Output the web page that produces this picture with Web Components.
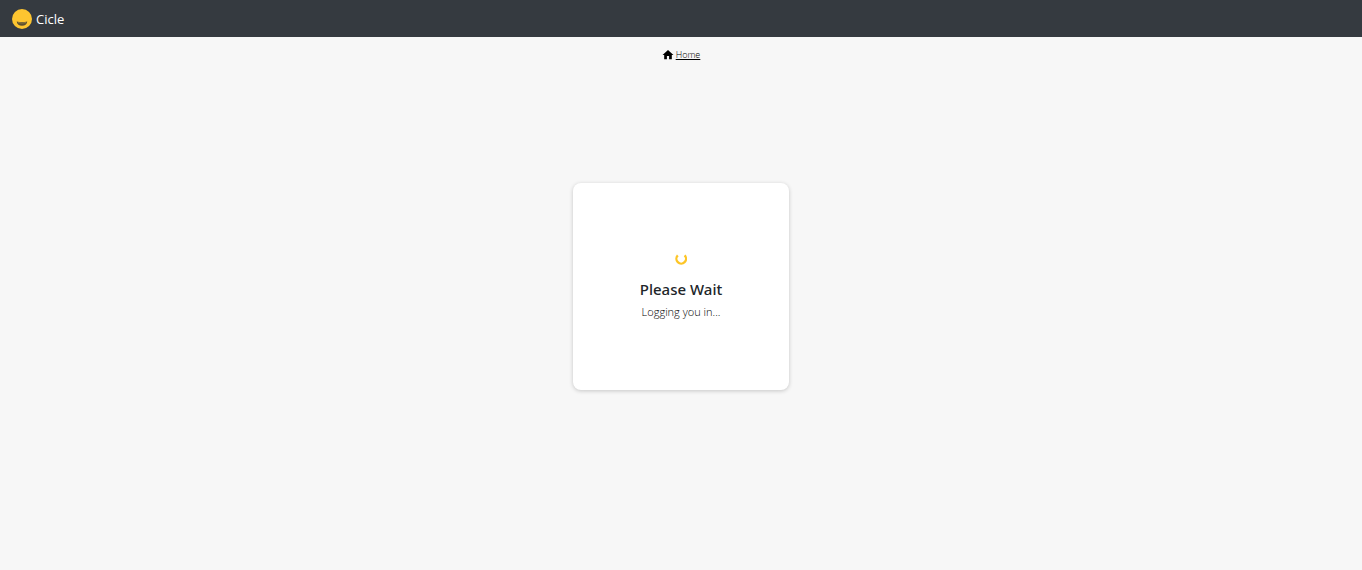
<!DOCTYPE html>
<html lang="en">
<head>
<meta charset="utf-8">
<meta name="viewport" content="width=device-width, initial-scale=1">
<title>Cicle</title>
<style>
body { margin: 0; background: #f7f7f7; color: #212529; font-family: "Noto Sans", "Open Sans", sans-serif; }
</style>
</head>
<body>
<cicle-app></cicle-app>
<script>
const define = (name, html) => {
  const template = document.createElement("template");
  template.innerHTML = html;
  customElements.define(name, class extends HTMLElement {
    constructor() {
      super();
      this.attachShadow({ mode: "open" }).append(template.content.cloneNode(true));
    }
  });
};

define("cicle-logo", `
<style>:host { display: block; width: 20px; height: 20px; } svg { display: block; }</style>
<svg width="20" height="20" viewBox="0 0 20 20" aria-hidden="true">
  <circle cx="10" cy="10" r="10" fill="#fdc530"/>
  <path d="M4.7 12.4Q10 13.8 15.3 12.4Q14.5 16.8 10 16.8Q5.5 16.8 4.7 12.4Z" fill="#5c4f30"/>
  <path d="M6 13.6Q10 14.4 14 13.6" fill="none" stroke="#a58a3a" stroke-width=".8"/>
</svg>`);

define("cicle-navbar", `
<style>
:host { display: block; background: #353a40; color: #fff; }
header { display: flex; align-items: center; gap: 4px; height: 37px; padding: 0 12px; font-family: "Open Sans", sans-serif; font-size: 13px; line-height: 20px; }
</style>
<header><cicle-logo></cicle-logo><slot></slot></header>`);

define("cicle-breadcrumb", `
<style>
:host { display: block; }
nav { display: flex; justify-content: center; align-items: center; gap: 2px; padding: 11px 0; line-height: 14px; font-size: 9px; }
a { color: #000; font-family: "Open Sans", sans-serif; font-weight: 300; }
svg { display: block; }
</style>
<nav aria-label="Breadcrumb">
  <svg width="12" height="12" viewBox="1 1 22 22" aria-hidden="true"><path fill="#000" d="M10 20v-6h4v6h5v-8h3L12 3 2 12h3v8z"/></svg>
  <a href="#"><slot></slot></a>
</nav>`);

define("cicle-spinner", `
<style>:host { display: block; } svg { display: block; }</style>
<svg width="12" height="12" viewBox="0 0 12 12" role="img" aria-label="Loading">
  <path d="M2.8 2.4A4.8 4.8 0 1 0 9.6 2.4" fill="none" stroke="#fdc526" stroke-width="2.3"/>
</svg>`);

define("cicle-card", `
<style>
:host { display: flex; flex-direction: column; align-items: center; justify-content: center; box-sizing: border-box; width: 216px; min-height: 207px; padding: 16px; background: #fff; border-radius: 8px; box-shadow: 0 1px 4px rgba(0,0,0,.2); text-align: center; }
h1 { margin: 12px 0 0; font-size: 15px; line-height: 24px; font-weight: 500; }
p { margin: 2px 0 0; color: #000; font-family: "Open Sans", sans-serif; font-size: 11px; line-height: 18px; font-weight: 300; }
</style>
<cicle-spinner></cicle-spinner>
<h1><slot name="title"></slot></h1>
<p><slot></slot></p>`);

define("cicle-app", `
<style>
:host { display: flex; flex-direction: column; min-height: 100vh; }
main { flex: 1; display: flex; align-items: center; justify-content: center; padding-bottom: 70px; }
</style>
<cicle-navbar>Cicle</cicle-navbar>
<cicle-breadcrumb>Home</cicle-breadcrumb>
<main><cicle-card><span slot="title">Please Wait</span>Logging you in...</cicle-card></main>`);
</script>
</body>
</html>
